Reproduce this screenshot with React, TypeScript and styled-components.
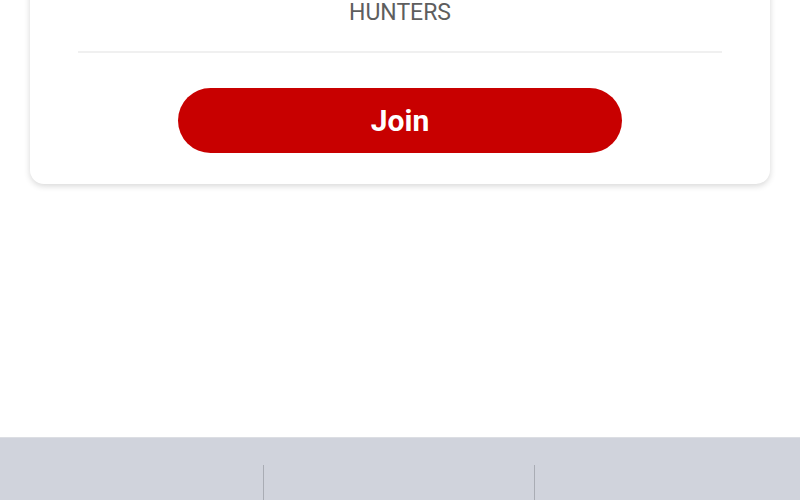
import styled, { createGlobalStyle } from "styled-components";

const GlobalStyle = createGlobalStyle`
    html, body {
        margin: 0;
        padding: 0;
        background-color: #ffffff;
        font-family: Roboto, "Liberation Sans", sans-serif;
    }
    #root {
        height: 500px;
        overflow: hidden;
    }
`;

const StyledPage = styled.div`
    height: 500px;
    display: flex;
    flex-direction: column;
    justify-content: space-between;
`;

const StyledCard = styled.section`
    margin: -30px 30px 0;
    background-color: #ffffff;
    border-radius: 14px;
    box-shadow: 0 2px 6px rgba(0, 0, 0, 0.16);
    padding: 30px 48px 31px;
    display: flex;
    flex-direction: column;
    align-items: center;
`;

const StyledTeam = styled.p`
    margin: 0;
    font-size: 23px;
    line-height: 26px;
    font-weight: 400;
    color: #5e5e5e;
`;

const StyledDivider = styled.hr`
    align-self: stretch;
    border: none;
    height: 2px;
    background-color: #f0f0f0;
    margin: 25px 0 35px;
`;

const StyledJoinButton = styled.button`
    width: 444px;
    height: 65px;
    border: none;
    border-radius: 33px;
    background-color: #c80000;
    color: #ffffff;
    font-family: Roboto, "Liberation Sans", sans-serif;
    font-weight: 700;
    font-size: 30px;
    cursor: pointer;
`;

const StyledTabBar = styled.nav`
    height: 62px;
    background-color: #d0d3dc;
    border-top: 1px solid #dcdee3;
    display: grid;
    grid-template-columns: 264px 271px 1fr;
`;

const StyledTab = styled.div<{ $divider: boolean }>`
    margin-top: 27px;
    border-right: ${props => props.$divider ? '1px solid #a9acb4' : 'none'};
`;

export default function App() {
    const tabs = [true, true, false];

    return (
        <>
            <GlobalStyle />
            <StyledPage>
                <StyledCard>
                    <StyledTeam>HUNTERS</StyledTeam>
                    <StyledDivider />
                    <StyledJoinButton>Join</StyledJoinButton>
                </StyledCard>
                <StyledTabBar>
                    {tabs.map((divider, i) => <StyledTab key={i} $divider={divider} />)}
                </StyledTabBar>
            </StyledPage>
        </>
    );
}
